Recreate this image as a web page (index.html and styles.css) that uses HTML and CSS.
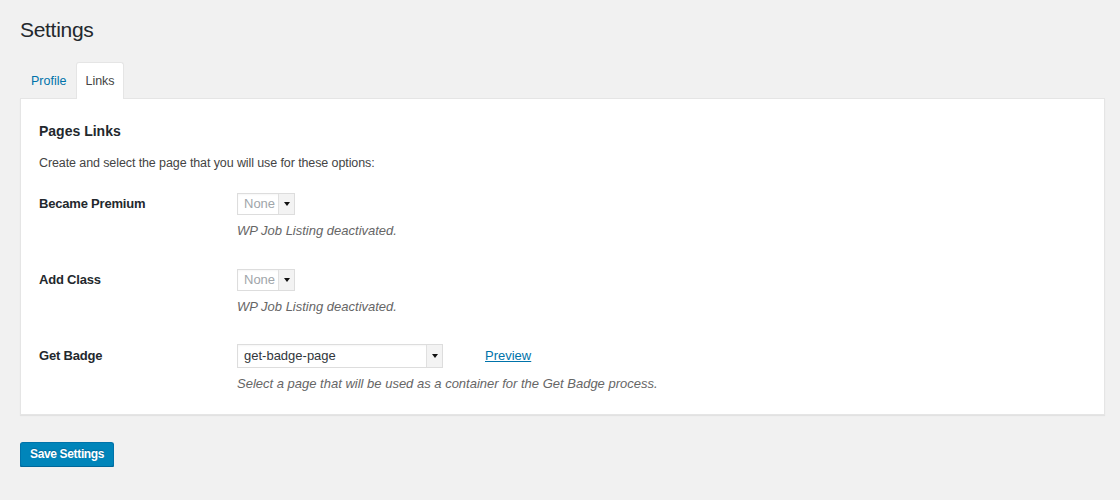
FILE: index.html
```html
<!DOCTYPE html>
<html>
<head>
<meta charset="utf-8">
<link rel="stylesheet" href="styles.css">
</head>
<body>
<div class="wrap">
  <h1 class="title">Settings</h1>
  <div class="tabs">
    <a class="tab" href="#">Profile</a>
    <a class="tab tab-active" href="#">Links</a>
  </div>
  <div class="panel">
    <h2 class="panel-title">Pages Links</h2>
    <p class="intro">Create and select the page that you will use for these options:</p>
    <div class="row">
      <div class="label">Became Premium</div>
      <div class="field">
        <div class="select select-small disabled"><span class="value">None</span><span class="arrow"></span></div>
        <p class="desc">WP Job Listing deactivated.</p>
      </div>
    </div>
    <div class="row">
      <div class="label">Add Class</div>
      <div class="field">
        <div class="select select-small disabled"><span class="value">None</span><span class="arrow"></span></div>
        <p class="desc">WP Job Listing deactivated.</p>
      </div>
    </div>
    <div class="row row-last">
      <div class="label">Get Badge</div>
      <div class="field">
        <div class="field-line">
          <div class="select select-wide"><span class="value">get-badge-page</span><span class="arrow"></span></div>
          <a class="preview" href="#">Preview</a>
        </div>
        <p class="desc">Select a page that will be used as a container for the Get Badge process.</p>
      </div>
    </div>
  </div>
  <button class="save">Save Settings</button>
</div>
</body>
</html>
```
FILE: styles.css
```css
html, body {
  margin: 0;
  padding: 0;
  background: #f1f1f1;
}
body {
  font-family: "Liberation Sans", Arial, sans-serif;
  font-size: 13px;
  color: #444;
}
.wrap {
  padding: 15px 15px 0 20px;
}
.title {
  margin: 0;
  font-size: 21px;
  letter-spacing: -0.3px;
  font-weight: 400;
  line-height: 29px;
  color: #23282d;
}
.tabs {
  display: flex;
  margin-top: 18px;
  height: 36px;
}
.tab {
  display: block;
  font-size: 12.5px;
  line-height: 18px;
  padding: 9px 9px 9px 10px;
  color: #0073aa;
  text-decoration: none;
  border: 1px solid transparent;
  border-bottom: none;
  border-radius: 3px 3px 0 0;
}
.tab-active {
  background: #fff;
  color: #444;
  border-color: #e5e5e5;
  padding: 9px 8px 10px;
  margin-left: 0;
  position: relative;
  z-index: 1;
  margin-bottom: -1px;
}
.panel {
  background: #fff;
  border: 1px solid #e5e5e5;
  box-shadow: 0 1px 1px rgba(0,0,0,0.06);
  padding: 22px 18px 21px;
}
.panel-title {
  margin: 0;
  font-size: 14px;
  line-height: 20px;
  font-weight: 700;
  color: #23282d;
}
.intro {
  margin: 13px 0 0;
  font-size: 12.5px;
  letter-spacing: -0.1px;
  line-height: 18px;
  color: #444;
}
.row {
  display: flex;
  margin-top: 21px;
  padding-bottom: 19px;
}
.row + .row {
  margin-top: 10px;
}
.row-last {
  margin-top: 9px !important;
  padding-bottom: 0;
}
.label {
  width: 198px;
  flex: none;
  font-weight: 700;
  letter-spacing: -0.2px;
  color: #23282d;
  line-height: 20px;
  padding-top: 1px;
}
.row-last .label {
  padding-top: 2px;
}
.field {
  display: flex;
  flex-direction: column;
}
.field-line {
  display: flex;
  align-items: flex-start;
}
.select {
  display: flex;
  align-items: stretch;
  border: 1px solid #ddd;
  background: #fff;
  box-sizing: border-box;
  box-shadow: inset 0 1px 2px rgba(0,0,0,0.04);
}
.select-small {
  width: 58px;
  height: 22px;
}
.select-wide {
  width: 206px;
  height: 24px;
}
.select .value {
  flex: 1;
  padding-left: 6px;
  line-height: 20px;
  color: #32373c;
}
.select-wide .value {
  line-height: 22px;
  font-size: 13px;
}
.select.disabled .value {
  color: #a0a5aa;
}
.select .arrow {
  width: 15px;
  flex: none;
  background: #f3f3f3;
  border-left: 1px solid #e0e0e0;
  display: flex;
  align-items: center;
  justify-content: center;
}
.select .arrow::after {
  content: "";
  width: 0;
  height: 0;
  border-left: 3px solid transparent;
  border-right: 3px solid transparent;
  border-top: 4px solid #111;
}
.preview {
  margin-left: 42px;
  padding-top: 2px;
  color: #0073aa;
  text-decoration: underline;
  line-height: 20px;
}
.desc {
  margin: 7px 0 0;
  font-style: italic;
  color: #666;
  line-height: 18px;
}
.row-last .desc {
  margin-top: 7px;
}
.save {
  margin-top: 27px;
  display: block;
  background: #0085ba;
  border: 1px solid #0073aa;
  border-bottom-color: #006799;
  border-radius: 3px;
  box-shadow: 0 1px 0 #006799;
  color: #fff;
  font-family: "Liberation Sans", Arial, sans-serif;
  font-size: 12px;
  letter-spacing: -0.35px;
  font-weight: 700;
  height: 25px;
  padding: 0 9px;
  line-height: 23px;
  text-shadow: 0 -1px 1px #006799;
  cursor: pointer;
}
```
